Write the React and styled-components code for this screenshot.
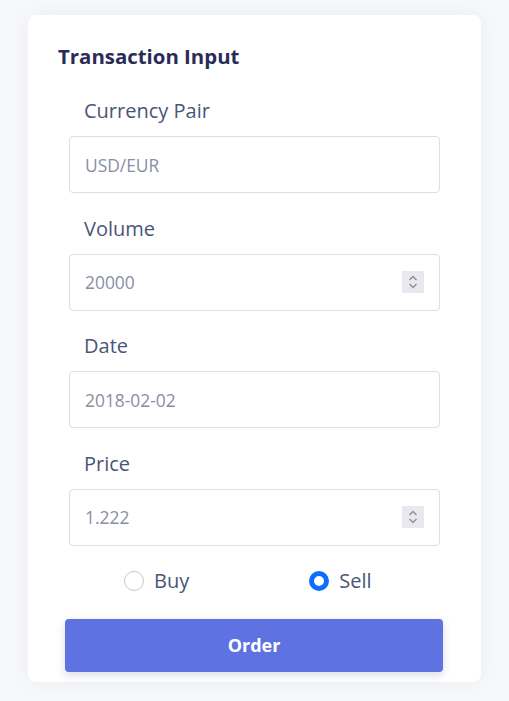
import React from "react";
import styled, { createGlobalStyle } from "styled-components";

const Global = createGlobalStyle`
  html, body { margin: 0; padding: 0; background: #f7f8fa; }
  body { font-family: "Open Sans", "Noto Sans", sans-serif; }
  * { box-sizing: border-box; }
`;

const Page = styled.div`
  padding: 15px 28px 19px;
  min-height: 701px;
`;

const Card = styled.div`
  background: #fff;
  border-radius: 8px;
  box-shadow: 0 0 24px rgba(30, 40, 80, 0.05);
  padding: 29px 38px 10px 37px;
  min-height: 667px;
`;

const Title = styled.h2`
  margin: 0 0 0 -7px;
  font-size: 20.4px;
  line-height: 24px;
  font-weight: 700;
  color: #2b2b57;
`;

const Form = styled.form`
  display: flex;
  flex-direction: column;
  padding: 29px 3px 0 4px;
`;

const Field = styled.div`
  display: flex;
  flex-direction: column;
  margin-bottom: ${(p) => (p.$last ? "0" : "21.6px")};
`;

const Label = styled.label`
  font-size: 20px;
  line-height: 27px;
  color: #495577;
  padding-left: 15px;
  margin-bottom: 12px;
`;

const Box = styled.div`
  display: flex;
  align-items: center;
  justify-content: space-between;
  height: 57px;
  border: 1px solid #dddee4;
  border-radius: 4px;
  padding: 0 15px 0 15px;
  background: #fff;
`;

const Input = styled.input`
  border: none;
  outline: none;
  background: transparent;
  font-family: inherit;
  font-size: 17.4px;
  color: #8a8ea2;
  flex: 1;
  min-width: 0;
  padding: 0;
`;

const Spinner = styled.span`
  width: 22px;
  height: 22px;
  background: #e8e8ee;
  display: flex;
  align-items: center;
  justify-content: center;
`;

const RadioRow = styled.div`
  display: flex;
  align-items: center;
  height: 68px;
  padding: 2px 0 0 55px;
  gap: 120px;
`;

const RadioLabel = styled.label`
  display: flex;
  align-items: center;
  gap: 10px;
  font-size: 20px;
  color: #495577;
`;

const Circle = styled.span`
  width: 20px;
  height: 20px;
  border-radius: 50%;
  border: ${(p) => (p.$checked ? "5px solid #0d6efd" : "1px solid #c6c7cc")};
  background: #fff;
`;

const Button = styled.button`
  display: block;
  margin: 5px -3px 0 -4px;
  height: 53px;
  border: none;
  border-radius: 4px;
  background: #5f72e2;
  color: #fff;
  font-family: inherit;
  font-weight: 700;
  font-size: 18px;
  box-shadow: 0 3px 8px rgba(60, 70, 140, 0.2);
`;

const Chevrons = () => (
  <svg width="12" height="16" viewBox="0 0 12 16" fill="none" stroke="#8e8e9a" strokeWidth="1.4">
    <path d="M2.5 6 L6 2.5 L9.5 6" />
    <path d="M2.5 10 L6 13.5 L9.5 10" />
  </svg>
);

const fields = [
  { label: "Currency Pair", value: "USD/EUR" },
  { label: "Volume", value: "20000", spin: true },
  { label: "Date", value: "2018-02-02" },
  { label: "Price", value: "1.222", spin: true },
];

export default function App() {
  return (
    <>
      <Global />
      <Page>
        <Card>
          <Title>Transaction Input</Title>
          <Form onSubmit={(e) => e.preventDefault()}>
            {fields.map((f, i) => (
              <Field key={f.label} $last={i === fields.length - 1}>
                <Label>{f.label}</Label>
                <Box>
                  <Input readOnly value={f.value} />
                  {f.spin && (
                    <Spinner>
                      <Chevrons />
                    </Spinner>
                  )}
                </Box>
              </Field>
            ))}
            <RadioRow>
              <RadioLabel>
                <Circle />
                Buy
              </RadioLabel>
              <RadioLabel>
                <Circle $checked />
                Sell
              </RadioLabel>
            </RadioRow>
            <Button type="submit">Order</Button>
          </Form>
        </Card>
      </Page>
    </>
  );
}
